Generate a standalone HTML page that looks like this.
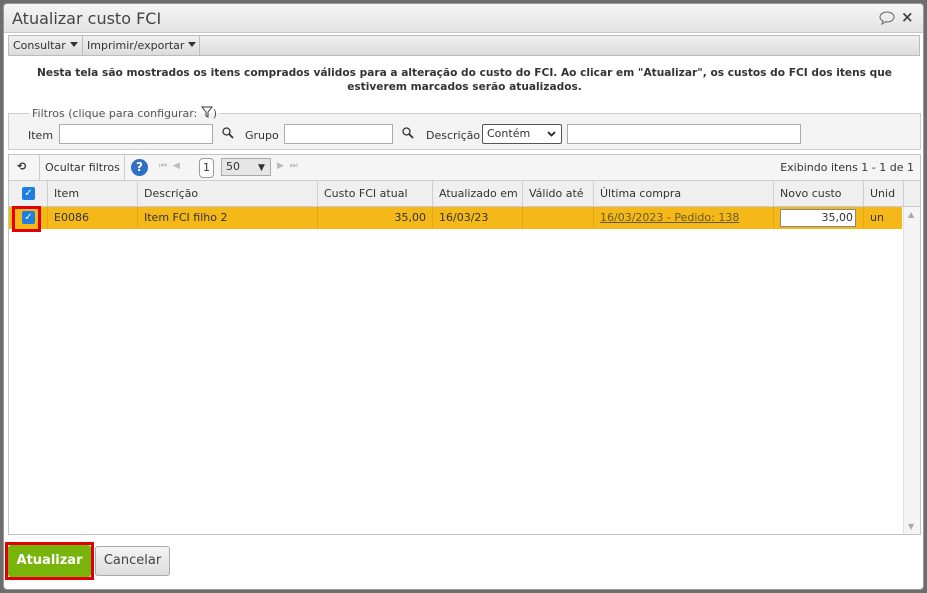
<!DOCTYPE html>
<html><head><style>
*{box-sizing:border-box}
body{margin:0;width:927px;height:593px;background:#6d6d6d;font-family:"DejaVu Sans","Liberation Sans",sans-serif;font-size:11px;color:#333;position:relative;overflow:hidden}
.dlg{position:absolute;left:3px;top:3px;width:921px;height:587px;background:#fff;border-radius:4px;border:1px solid #999}
.title{position:absolute;left:0;top:0;width:100%;height:29px;background:linear-gradient(#f6f6f6,#e2e2e2);border-bottom:1px solid #c8c8c8;border-radius:4px 4px 0 0}
.title span{position:absolute;left:8px;top:5px;font-size:16px;color:#444}
.abs{position:absolute;white-space:nowrap}
.tb{left:4px;top:31px;width:912px;height:21px;background:linear-gradient(#f0f0f0,#dcdcdc);border:1px solid #bbb}
.tb div{position:absolute;top:0;height:19px;line-height:19px;padding-left:4px;border-right:1px solid #bbb;white-space:nowrap}
.tri{display:inline-block;border-left:4px solid transparent;border-right:4px solid transparent;border-top:5px solid #333;margin-left:4px;vertical-align:2px}
.msg{left:0;width:921px;text-align:center;font-weight:bold;font-size:10.6px;color:#333;line-height:14px}
.fs{left:4px;top:109px;width:913px;height:37px;border:1px solid #ccc;background:#f3f3f3}
input.t{position:absolute;height:20px;border:1px solid #aaa;background:#fff}
.grid{left:4px;top:150px;width:913px;height:381px;border:1px solid #c4c4c4}
.gtb{left:0;top:0;width:911px;height:26px;background:#f5f5f5;border-bottom:1px solid #ccc}
.hd{left:0;top:26px;width:911px;height:26px;background:#efefef;border-bottom:1px solid #ccc}
.hd div,.row div{position:absolute;top:0;height:100%;padding-left:6px;line-height:25px;border-right:1px solid #d0d0d0;white-space:nowrap}
.row{left:0;top:52px;width:893px;height:22px;background:#f4b919}
.row div{line-height:21px;color:#333;border-right:1px solid #e3a80e}
.cb{position:absolute;width:13px;height:13px;background:#1e7fe0;border-radius:2px;color:#fff;font-size:10px;line-height:13px;text-align:center;font-weight:bold}
</style></head><body>
<div class="dlg">
<div class="title"><span>Atualizar custo FCI</span>
<svg class="abs" style="left:875px;top:7px" width="16" height="14"><ellipse cx="8" cy="6" rx="7" ry="5" fill="none" stroke="#666"/><path d="M4 10 L3 13 L7 10.5" fill="#fff" stroke="#666"/></svg>
<span class="abs" style="left:897px;top:4px;font-size:15px;font-weight:bold;color:#444">×</span></div>
<div class="abs tb"><div style="left:0;width:74px">Consultar<span class="tri"></span></div><div style="left:74px;width:117px">Imprimir/exportar<span class="tri"></span></div></div>
<div class="abs msg" style="top:62px">Nesta tela são mostrados os itens comprados válidos para a alteração do custo do FCI. Ao clicar em "Atualizar", os custos do FCI dos itens que</div>
<div class="abs msg" style="top:76px">estiverem marcados serão atualizados.</div>
<div class="abs fs">
<span class="abs" style="left:20px;top:-8px;padding:0 3px;color:#555;background:linear-gradient(#fff 50%,#f3f3f3 50%)">Filtros (clique para configurar: <svg width="12" height="12" style="vertical-align:-1px"><path d="M1 1 H11 L7 6 V11 L5 10 V6 Z" fill="none" stroke="#333"/></svg>)</span>
<span class="abs" style="left:19px;top:15px">Item</span>
<input class="t" style="left:50px;top:10px;width:154px">
<svg class="abs" style="left:213px;top:13px" width="12" height="12"><circle cx="4.5" cy="4.5" r="3.5" fill="none" stroke="#333" stroke-width="1.3"/><path d="M7 7 L11 11" stroke="#333" stroke-width="1.8"/></svg>
<span class="abs" style="left:236px;top:15px">Grupo</span>
<input class="t" style="left:275px;top:10px;width:109px">
<svg class="abs" style="left:393px;top:13px" width="12" height="12"><circle cx="4.5" cy="4.5" r="3.5" fill="none" stroke="#333" stroke-width="1.3"/><path d="M7 7 L11 11" stroke="#333" stroke-width="1.8"/></svg>
<span class="abs" style="left:417px;top:15px">Descrição</span>
<div class="abs" style="left:473px;top:10px;width:80px;height:20px;border:1px solid #555;border-radius:2px;background:#fff;padding-left:4px;line-height:18px">Contém<svg class="abs" style="left:64px;top:6px" width="9" height="6"><path d="M1 1 L4.5 4.5 L8 1" fill="none" stroke="#222" stroke-width="1.8"/></svg></div>
<input class="t" style="left:558px;top:10px;width:234px">
</div>
<div class="abs grid">
<div class="abs gtb">
<span class="abs" style="left:8px;top:5px;font-weight:bold">⟲</span>
<div class="abs" style="left:30px;top:0;height:26px;border-left:1px solid #ccc;border-right:1px solid #ccc;width:86px;padding-left:5px;line-height:25px">Ocultar filtros</div>
<div class="abs" style="left:122px;top:4px;width:17px;height:17px;border-radius:50%;background:#2f6fc4;color:#fff;font-weight:bold;text-align:center;line-height:17px;font-size:12px">?</div>
<span class="abs" style="left:150px;top:6px;color:#bbb;font-size:9px">⏮ &nbsp;◀</span>
<div class="abs" style="left:190px;top:3px;width:15px;height:20px;border:1px solid #999;border-radius:4px;background:#fff;text-align:center;line-height:18px">1</div>
<div class="abs" style="left:212px;top:3px;width:50px;height:18px;border:1px solid #aaa;background:#e6e6e6;padding-left:4px;line-height:16px">50<span class="abs" style="left:36px;top:1px;font-size:9px">▼</span></div>
<span class="abs" style="left:268px;top:6px;color:#bbb;font-size:9px">▶ &nbsp;⏭</span>
<span class="abs" style="right:6px;top:6px">Exibindo itens 1 - 1 de 1</span>
</div>
<div class="abs hd">
<div style="left:0;width:39px"><span class="cb" style="left:13px;top:6px">✓</span></div>
<div style="left:39px;width:90px">Item</div>
<div style="left:129px;width:180px">Descrição</div>
<div style="left:309px;width:115px">Custo FCI atual</div>
<div style="left:424px;width:90px">Atualizado em</div>
<div style="left:514px;width:71px">Válido até</div>
<div style="left:585px;width:180px">Última compra</div>
<div style="left:765px;width:90px">Novo custo</div>
<div style="left:855px;width:40px">Unid</div>
</div>
<div class="abs row">
<div style="left:0;width:39px"><span class="cb" style="left:13px;top:4px">✓</span></div>
<div style="left:39px;width:90px">E0086</div>
<div style="left:129px;width:180px">Item FCI filho 2</div>
<div style="left:309px;width:115px;text-align:right;padding-right:6px">35,00</div>
<div style="left:424px;width:90px">16/03/23</div>
<div style="left:514px;width:71px"></div>
<div style="left:585px;width:180px;text-decoration:underline;color:#6a5a2a">16/03/2023 - Pedido: 138</div>
<div style="left:765px;width:90px"><span class="abs" style="left:6px;top:2px;width:76px;height:18px;background:#fff;border:1px solid #888;text-align:right;padding-right:2px;line-height:16px">35,00</span></div>
<div style="left:855px;width:38px;border:none">un</div>
</div>
<div class="abs" style="left:894px;top:52px;width:17px;height:327px;background:#f4f4f4;border-left:1px solid #e0e0e0"><span class="abs" style="left:4px;top:3px;font-size:8px;color:#aaa">▲</span><span class="abs" style="left:4px;bottom:3px;font-size:8px;color:#aaa">▼</span></div>
<div class="abs" style="left:3px;top:51px;width:29px;height:26px;border:3px solid #e00000"></div>
</div>
<div class="abs" style="left:1px;top:538px;width:89px;height:38px;border:3px solid #e00000"></div>
<div class="abs" style="left:4px;top:541px;width:83px;height:32px;background:#78b40a;border-radius:3px;color:#fff;font-weight:bold;font-size:13px;text-align:center;line-height:31px">Atualizar</div>
<div class="abs" style="left:91px;top:542px;width:75px;height:30px;background:linear-gradient(#f4f4f4,#ddd);border:1px solid #aaa;border-radius:3px;text-align:center;line-height:28px;font-size:13px;color:#444">Cancelar</div>
</div>
</body></html>
